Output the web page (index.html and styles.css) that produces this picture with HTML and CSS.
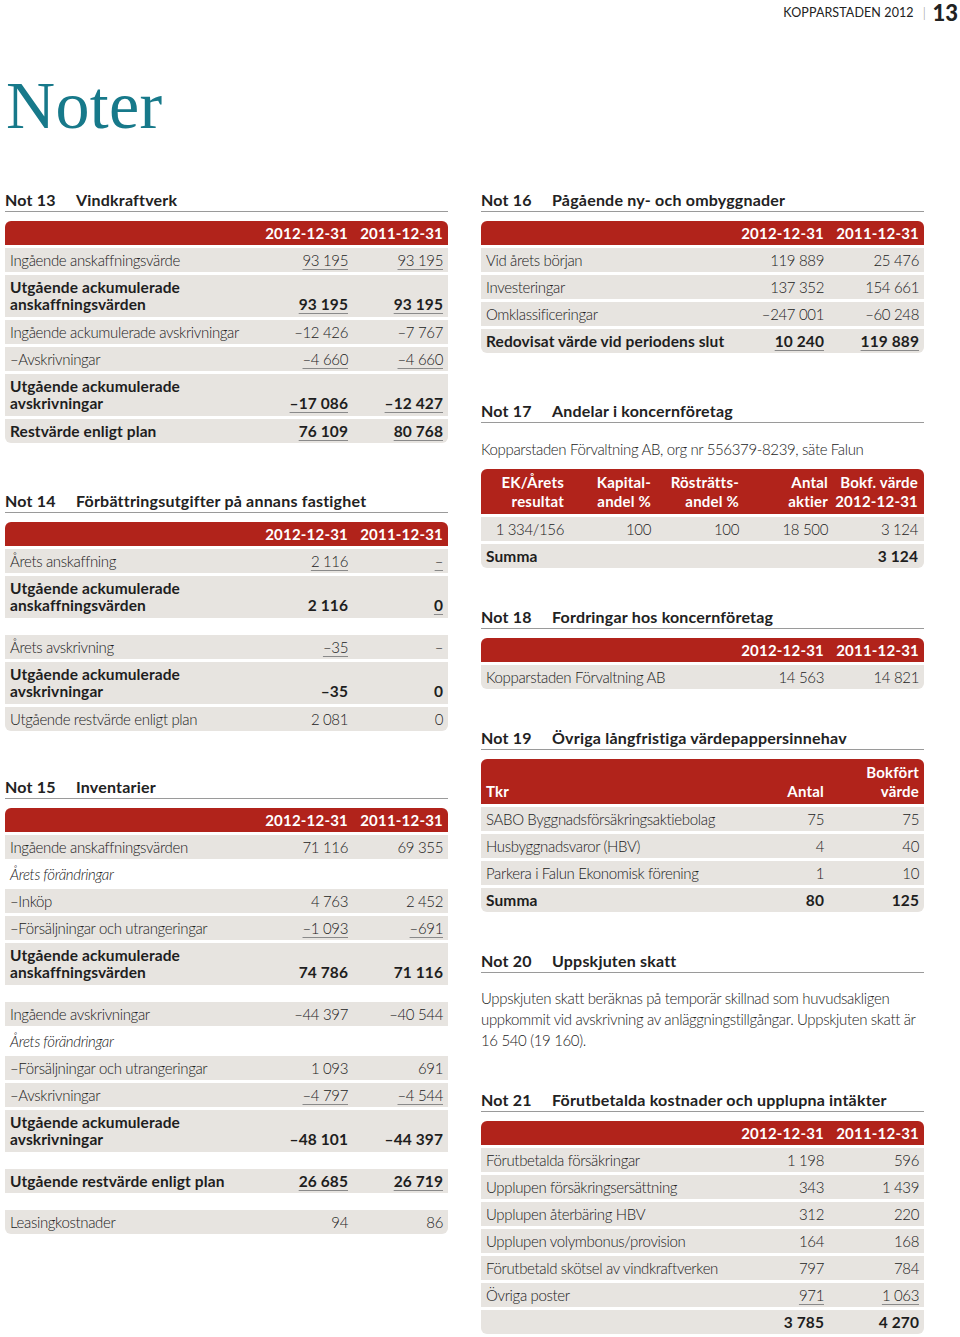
FILE: index.html
```html
<!DOCTYPE html>
<html lang="sv">
<head>
<meta charset="utf-8">
<title>Noter</title>
<link rel="stylesheet" href="styles.css">
</head>
<body>
<header class="top">
  <span class="top-title">KOPPARSTADEN 2012</span>
  <span class="top-sep">|</span>
  <span class="top-page">13</span>
</header>
<h1 class="page-title">Noter</h1>

<main class="cols">
  <div class="col">
    <section class="note">
      <h2 class="note-head"><span class="note-no">Not 13</span><span>Vindkraftverk</span></h2>
      <div class="tbl">
        <div class="row head"><span></span><span class="v">2012-12-31</span><span class="v">2011-12-31</span></div>
        <div class="row"><span>Ingående anskaffningsvärde</span><span class="v u">93 195</span><span class="v u">93 195</span></div>
        <div class="row two bold"><span>Utgående ackumulerade<br>anskaffningsvärden</span><span class="v u">93 195</span><span class="v u">93 195</span></div>
        <div class="row"><span>Ingående ackumulerade avskrivningar</span><span class="v">–12 426</span><span class="v">–7 767</span></div>
        <div class="row"><span>–Avskrivningar</span><span class="v u">–4 660</span><span class="v u">–4 660</span></div>
        <div class="row two bold"><span>Utgående ackumulerade<br>avskrivningar</span><span class="v u">–17 086</span><span class="v u">–12 427</span></div>
        <div class="row bold last"><span>Restvärde enligt plan</span><span class="v u">76 109</span><span class="v u">80 768</span></div>
      </div>
    </section>

    <section class="note gap-lg">
      <h2 class="note-head"><span class="note-no">Not 14</span><span>Förbättringsutgifter på annans fastighet</span></h2>
      <div class="tbl">
        <div class="row head"><span></span><span class="v">2012-12-31</span><span class="v">2011-12-31</span></div>
        <div class="row"><span>Årets anskaffning</span><span class="v u">2 116</span><span class="v u">–</span></div>
        <div class="row two bold"><span>Utgående ackumulerade<br>anskaffningsvärden</span><span class="v">2 116</span><span class="v u">0</span></div>
        <div class="row spaced"><span>Årets avskrivning</span><span class="v u">–35</span><span class="v">–</span></div>
        <div class="row two bold"><span>Utgående ackumulerade<br>avskrivningar</span><span class="v">–35</span><span class="v">0</span></div>
        <div class="row last"><span>Utgående restvärde enligt plan</span><span class="v">2 081</span><span class="v">0</span></div>
      </div>
    </section>

    <section class="note gap-md2">
      <h2 class="note-head"><span class="note-no">Not 15</span><span>Inventarier</span></h2>
      <div class="tbl">
        <div class="row head"><span></span><span class="v">2012-12-31</span><span class="v">2011-12-31</span></div>
        <div class="row"><span>Ingående anskaffningsvärden</span><span class="v">71 116</span><span class="v">69 355</span></div>
        <div class="row plain"><span class="it">Årets förändringar</span><span></span><span></span></div>
        <div class="row"><span>–Inköp</span><span class="v">4 763</span><span class="v">2 452</span></div>
        <div class="row"><span>–Försäljningar och utrangeringar</span><span class="v u">–1 093</span><span class="v u">–691</span></div>
        <div class="row two bold"><span>Utgående ackumulerade<br>anskaffningsvärden</span><span class="v">74 786</span><span class="v">71 116</span></div>
        <div class="row spaced"><span>Ingående avskrivningar</span><span class="v">–44 397</span><span class="v">–40 544</span></div>
        <div class="row plain"><span class="it">Årets förändringar</span><span></span><span></span></div>
        <div class="row"><span>–Försäljningar och utrangeringar</span><span class="v">1 093</span><span class="v">691</span></div>
        <div class="row"><span>–Avskrivningar</span><span class="v u">–4 797</span><span class="v u">–4 544</span></div>
        <div class="row two bold"><span>Utgående ackumulerade<br>avskrivningar</span><span class="v">–48 101</span><span class="v">–44 397</span></div>
        <div class="row bold spaced"><span>Utgående restvärde enligt plan</span><span class="v u">26 685</span><span class="v u">26 719</span></div>
        <div class="row spaced last"><span>Leasingkostnader</span><span class="v">94</span><span class="v">86</span></div>
      </div>
    </section>
  </div>

  <div class="col">
    <section class="note">
      <h2 class="note-head"><span class="note-no">Not 16</span><span>Pågående ny- och ombyggnader</span></h2>
      <div class="tbl">
        <div class="row head"><span></span><span class="v">2012-12-31</span><span class="v">2011-12-31</span></div>
        <div class="row"><span>Vid årets början</span><span class="v">119 889</span><span class="v">25 476</span></div>
        <div class="row"><span>Investeringar</span><span class="v">137 352</span><span class="v">154 661</span></div>
        <div class="row"><span>Omklassificeringar</span><span class="v">–247 001</span><span class="v">–60 248</span></div>
        <div class="row bold last"><span>Redovisat värde vid periodens slut</span><span class="v u">10 240</span><span class="v u">119 889</span></div>
      </div>
    </section>

    <section class="note gap-lg">
      <h2 class="note-head"><span class="note-no">Not 17</span><span>Andelar i koncernföretag</span></h2>
      <p class="note-text intro">Kopparstaden Förvaltning AB, org nr 556379-8239, säte Falun</p>
      <div class="tbl t5">
        <div class="row head two-head"><span class="v">EK/Årets<br>resultat</span><span class="v">Kapital-<br>andel %</span><span class="v">Rösträtts-<br>andel %</span><span class="v">Antal<br>aktier</span><span class="v">Bokf. värde<br>2012-12-31</span></div>
        <div class="row"><span class="v">1 334/156</span><span class="v">100</span><span class="v">100</span><span class="v">18 500</span><span class="v">3 124</span></div>
        <div class="row bold last"><span class="sum">Summa</span><span class="v">3 124</span></div>
      </div>
    </section>

    <section class="note gap-md">
      <h2 class="note-head"><span class="note-no">Not 18</span><span>Fordringar hos koncernföretag</span></h2>
      <div class="tbl">
        <div class="row head"><span></span><span class="v">2012-12-31</span><span class="v">2011-12-31</span></div>
        <div class="row last"><span>Kopparstaden Förvaltning AB</span><span class="v">14 563</span><span class="v">14 821</span></div>
      </div>
    </section>

    <section class="note gap-md">
      <h2 class="note-head"><span class="note-no">Not 19</span><span>Övriga långfristiga värdepappersinnehav</span></h2>
      <div class="tbl">
        <div class="row head two-head"><span>Tkr</span><span class="v">Antal</span><span class="v">Bokfört<br>värde</span></div>
        <div class="row"><span>SABO Byggnadsförsäkringsaktiebolag</span><span class="v">75</span><span class="v">75</span></div>
        <div class="row"><span>Husbyggnadsvaror (HBV)</span><span class="v">4</span><span class="v">40</span></div>
        <div class="row"><span>Parkera i Falun Ekonomisk förening</span><span class="v">1</span><span class="v">10</span></div>
        <div class="row bold last"><span>Summa</span><span class="v">80</span><span class="v">125</span></div>
      </div>
    </section>

    <section class="note gap-md">
      <h2 class="note-head"><span class="note-no">Not 20</span><span>Uppskjuten skatt</span></h2>
      <p class="note-text para">Uppskjuten skatt beräknas på temporär skillnad som huvudsakligen uppkommit vid avskrivning av anläggningstillgångar. Uppskjuten skatt är 16 540 (19 160).</p>
    </section>

    <section class="note gap-md">
      <h2 class="note-head"><span class="note-no">Not 21</span><span>Förutbetalda kostnader och upplupna intäkter</span></h2>
      <div class="tbl">
        <div class="row head"><span></span><span class="v">2012-12-31</span><span class="v">2011-12-31</span></div>
        <div class="row"><span>Förutbetalda försäkringar</span><span class="v">1 198</span><span class="v">596</span></div>
        <div class="row"><span>Upplupen försäkringsersättning</span><span class="v">343</span><span class="v">1 439</span></div>
        <div class="row"><span>Upplupen återbäring HBV</span><span class="v">312</span><span class="v">220</span></div>
        <div class="row"><span>Upplupen volymbonus/provision</span><span class="v">164</span><span class="v">168</span></div>
        <div class="row"><span>Förutbetald skötsel av vindkraftverken</span><span class="v">797</span><span class="v">784</span></div>
        <div class="row"><span>Övriga poster</span><span class="v u">971</span><span class="v u">1 063</span></div>
        <div class="row bold last"><span></span><span class="v">3 785</span><span class="v">4 270</span></div>
      </div>
    </section>
  </div>
</main>
</body>
</html>
```

FILE: styles.css
```css
* { box-sizing: border-box; }

body {
  margin: 0;
  width: 960px;
  font-family: Lato, "Liberation Sans", sans-serif;
  font-weight: 300;
  font-size: 15px;
  letter-spacing: -0.35px;
  color: #222;
  background: #fff;
}

.top {
  display: flex;
  justify-content: flex-end;
  align-items: center;
  gap: 7px;
  height: 25px;
  padding-right: 2px;
}
.top-title {
  font-size: 12.5px;
  font-weight: 400;
  letter-spacing: 0.1px;
  color: #222;
  margin-right: 2px;
}
.top-sep {
  font-size: 13px;
  color: #888;
}
.top-page {
  font-size: 22px;
  font-weight: 900;
  letter-spacing: 0;
  color: #222;
  line-height: 1;
}

.page-title {
  margin: 46px 0 0 6px;
  font-family: "Liberation Serif", "Times New Roman", serif;
  font-weight: 400;
  font-size: 68px;
  line-height: 68px;
  letter-spacing: 0.3px;
  color: #17798a;
  height: 119px;
}

.cols {
  display: flex;
  gap: 33px;
  padding-left: 5px;
}
.col {
  width: 443px;
  display: flex;
  flex-direction: column;
}

.note.gap-lg { margin-top: 48px; }
.note.gap-md2 { margin-top: 46px; }
.note.gap-md { margin-top: 39px; }

.note-head {
  margin: 0 0 9px;
  display: flex;
  font-size: 16px;
  font-weight: 700;
  line-height: 20px;
  letter-spacing: 0.2px;
  color: #222;
  padding-bottom: 1px;
  border-bottom: 1px solid #9a9a9a;
}
.note-no { width: 71px; flex: none; }

.note-text {
  margin: 0;
  line-height: 21px;
}
.note-text.intro { margin: 16px 0 10px; line-height: 20px; }
.note-text.para { margin-top: 15px; }

.tbl {
  display: flex;
  flex-direction: column;
  gap: 3px;
}

.row {
  display: grid;
  grid-template-columns: 1fr 95px 95px;
  align-items: end;
  padding: 0 5px;
  min-height: 24px;
  line-height: 24px;
  background: #e7e4e0;
}
.row .v {
  text-align: right;
  white-space: nowrap;
}
.row.two {
  line-height: 17px;
  padding-top: 4px;
  padding-bottom: 4px;
}
.row.bold {
  font-weight: 700;
  font-size: 15.5px;
  letter-spacing: 0.1px;
  color: #1e1e1e;
}
.row.spaced { margin-top: 14px; }
.row.plain { background: transparent; }
.row.last { border-radius: 0 0 6px 6px; }
.it { font-style: italic; }

.u {
  text-decoration: underline;
  text-decoration-thickness: 1px;
  text-underline-offset: 3px;
  text-decoration-color: #8a8a8a;
}

.row.head {
  background: #b1231b;
  color: #fff;
  font-weight: 700;
  font-size: 15px;
  border-radius: 6px 6px 0 0;
  letter-spacing: 0.2px;
}
.row.two-head {
  line-height: 19px;
  padding-top: 4px;
  padding-bottom: 3px;
}

.t5 .row { grid-template-columns: 78px 87px 88px 89px 90px; }
.t5 .sum { grid-column: 1 / 5; text-align: left; }
```
